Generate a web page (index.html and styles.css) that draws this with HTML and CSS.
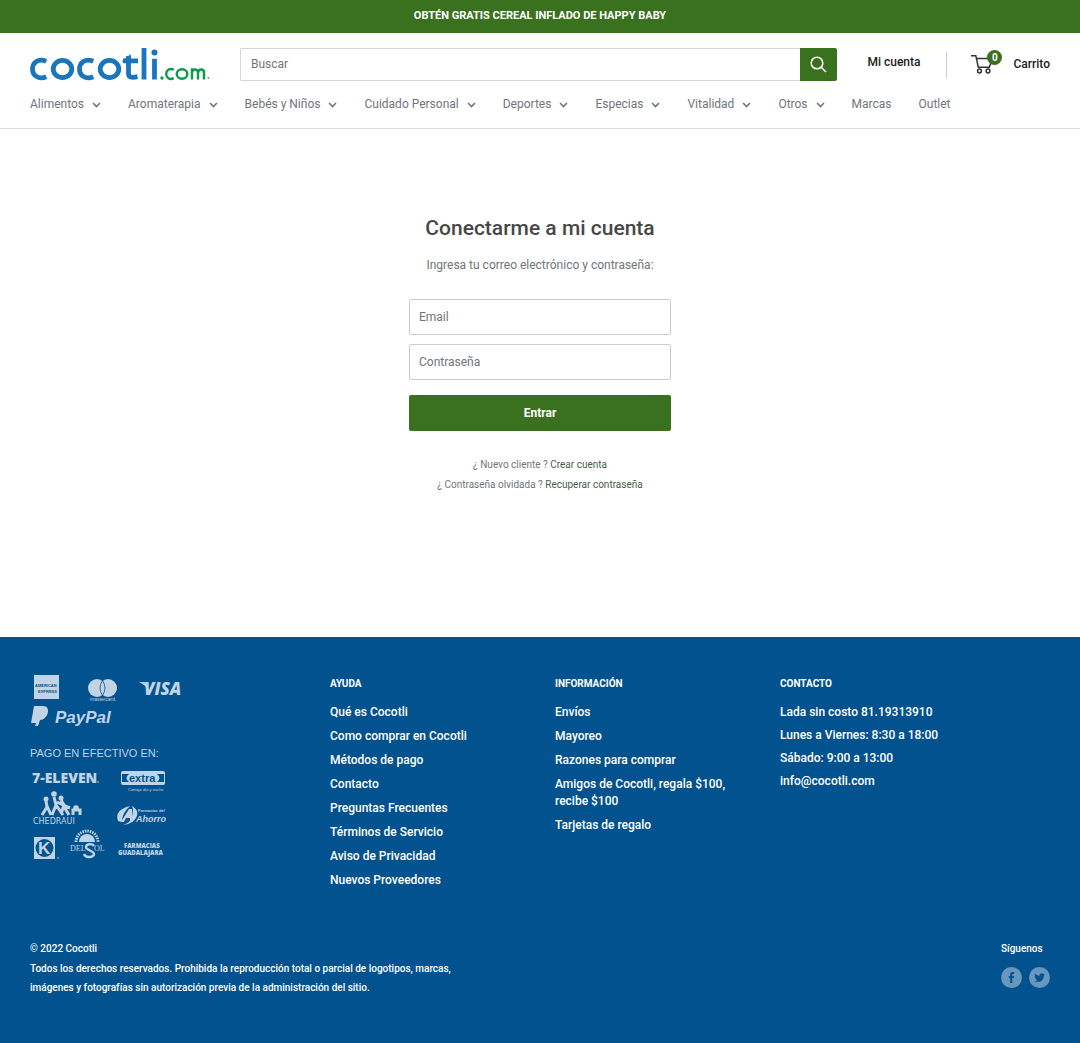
FILE: index.html
```html
<!DOCTYPE html>
<html lang="es">
<head>
<meta charset="utf-8">
<meta name="viewport" content="width=device-width, initial-scale=1">
<title>Cuenta – Cocotli.com</title>
<link rel="stylesheet" href="styles.css">
</head>
<body>
<svg class="sprite" width="0" height="0" aria-hidden="true">
  <symbol id="chevron" viewBox="0 0 10 8"><path d="M1.2 1.8 5 5.8l3.8-4" fill="none" stroke="currentColor" stroke-width="1.8"/></symbol>
</svg>
<div class="announcement">OBTÉN GRATIS CEREAL INFLADO DE HAPPY BABY</div>
<header class="header">
  <div class="header-row">
    <a class="logo" href="#" aria-label="Cocotli.com">
      <svg width="180" height="34" viewBox="0 0 180 34">
        <g fill="none" stroke="#1b75bc" stroke-width="4.8">
          <path d="M16.300 13.300C8 10 2.500 14.500 2.500 21s6 11 13.800 7.700"/>
          <ellipse cx="32.500" cy="21" rx="9.300" ry="8.600"/>
          <path d="M63.300 13.300C55 10 49.500 14.500 49.500 21s6 11 13.800 7.700"/>
          <ellipse cx="79.500" cy="21" rx="9.300" ry="8.600"/>
          <path d="M98.500 8v17.500q0 5.500 9 3.200M93 12.800h15"/>
          <path d="M114 0v31.500M124.500 10.800v20.700"/>
        </g>
        <path d="M91.500 13.500 100.700 6v7.500z" fill="#1b75bc"/>
        <circle cx="124.500" cy="4.500" r="3" fill="#1b75bc"/>
        <g fill="none" stroke="#0a9b48" stroke-width="2.400">
          <path d="M143.800 21.800c-4.300-2.200-7.600.4-7.600 4.200s3.300 6.300 7.600 4.200"/>
          <ellipse cx="152" cy="26" rx="5.300" ry="4.800"/>
          <path d="M162 20.200v11.300m0-7.500c1-3.500 6-3.500 6 1v6.500m0-7c1-4 6-4 6 .5v6.500"/>
        </g>
        <circle cx="132" cy="30" r="1.700" fill="#0a9b48"/>
        <circle cx="178.500" cy="30" r="1.100" fill="#6fa5d2"/>
      </svg>
    </a>
    <form class="search">
      <input class="search-input" type="search" placeholder="Buscar" aria-label="Buscar">
      <button class="search-button" type="button" aria-label="Buscar">
        <svg width="17" height="17" viewBox="0 0 17 17" fill="none" stroke="#fff" stroke-width="1.500"><circle cx="7" cy="7" r="5.800"/><path d="m11.200 11.200 4.800 4.800"/></svg>
      </button>
    </form>
    <a class="account" href="#">Mi cuenta</a>
    <a class="cart" href="#">
      <span class="cart-icon">
        <svg width="22" height="20" viewBox="0 0 22 20" fill="none" stroke="#333" stroke-width="1.500"><path d="M0 .7h4.800l2.500 11.500h11l3-8.700H5.500"/><circle cx="8.500" cy="16" r="1.900"/><circle cx="17" cy="16" r="1.900"/></svg>
        <span class="badge">0</span>
      </span>
      Carrito
    </a>
  </div>
  <nav class="nav">
    <a href="#">Alimentos <svg class="chev"><use href="#chevron"/></svg></a>
    <a href="#">Aromaterapia <svg class="chev"><use href="#chevron"/></svg></a>
    <a href="#">Bebés y Niños <svg class="chev"><use href="#chevron"/></svg></a>
    <a href="#">Cuidado Personal <svg class="chev"><use href="#chevron"/></svg></a>
    <a href="#">Deportes <svg class="chev"><use href="#chevron"/></svg></a>
    <a href="#">Especias <svg class="chev"><use href="#chevron"/></svg></a>
    <a href="#">Vitalidad <svg class="chev"><use href="#chevron"/></svg></a>
    <a href="#">Otros <svg class="chev"><use href="#chevron"/></svg></a>
    <a href="#">Marcas</a>
    <a href="#">Outlet</a>
  </nav>
</header>
<main class="main">
  <form class="login">
    <h1>Conectarme a mi cuenta</h1>
    <p class="intro">Ingresa tu correo electrónico y contraseña:</p>
    <input class="field" type="email" placeholder="Email" aria-label="Email">
    <input class="field" type="password" placeholder="Contraseña" aria-label="Contraseña">
    <button class="submit" type="button">Entrar</button>
    <p class="hint">¿ Nuevo cliente ? <a href="#">Crear cuenta</a></p>
    <p class="hint">¿ Contraseña olvidada ? <a href="#">Recuperar contraseña</a></p>
  </form>
</main>
<footer class="footer">
  <div class="footer-grid">
    <svg class="payments" width="152" height="188" viewBox="0 0 152 188" fill="#c1d3e4" font-family="Liberation Sans, sans-serif">
      <path d="M4 0h25v24H4z"/>
      <g fill="#02528f" font-weight="bold" font-size="4">
        <text x="5" y="12">AMERICAN</text><text x="8" y="18">EXPRESS</text>
      </g>
      <circle cx="67" cy="13" r="9"/><circle cx="78" cy="13" r="9"/>
      <path d="M72.500 5.500q-5 7.500 0 15q5-7.500 0-15z" fill="none" stroke="#02528f" stroke-width=".8"/>
      <text x="60" y="26" font-size="5">mastercard.</text>
      <text x="114" y="20" font-family="Open Sans, sans-serif" font-size="17" font-weight="800" font-style="italic">VISA</text>
      <path d="M109 7h6l4 8-1 1q-2-6-9-9z"/>
      <path d="M4 31h9c9 0 5 14-3 14l-2 6H5l1-3H1z"/>
      <text x="25" y="48" font-size="17" font-weight="bold" font-style="italic">PayPal</text>
      <text x="0" y="82" font-size="11">PAGO EN EFECTIVO EN:</text>
      <text x="2" y="108" font-family="Open Sans, sans-serif" font-size="14" font-weight="800">7-ELEVEN</text>
      <circle cx="68" cy="107" r=".8"/>
      <path d="M93 96h40q2 0 2 2v10q0 2-2 2H93q-2 0-2-2V98q0-2 2-2z"/>
      <path d="M92 99h7q-5 4 0 8h-7zM134 99h-7q5 4 0 8h7z" fill="#02528f"/>
      <text x="99" y="107" font-size="11" font-weight="bold" fill="#02528f">extra</text>
      <text x="98" y="116" font-size="4">Contigo día y noche</text>
      <g fill="none" stroke="#c1d3e4" stroke-width="3">
        <path d="m12 140 5-8-1-6M17 131l4 9M22 140l4-10-2-8M26 130l7 10M31 139l3-9-3-5M33 130l6 10M27 127l8 4 5 2"/>
        <path d="M43 140v-5h7v5"/>
      </g>
      <circle cx="16" cy="124" r="2.500"/><circle cx="24" cy="119" r="2.800"/><circle cx="31" cy="123" r="2.500"/><circle cx="46" cy="133" r="2.800"/>
      <text x="3" y="149" font-family="DejaVu Sans, sans-serif" font-size="8">CHEDRAUI</text>
      <path d="M100 131q-16 4-12 15l4 1q0-9 8-16zM102 131q8 5 4 12-4 6-13 7 8-3 9-8 2-6 0-11z"/>
      <path d="m91 147 8-13h3l1 13h-3v-4h-4l-2 4z"/>
      <text x="108" y="137" font-size="4" font-weight="bold">Farmacias del</text>
      <text x="106" y="147" font-size="9" font-weight="bold" font-style="italic">Ahorro</text>
      <path d="M4 162h21v22H4z"/><circle cx="14.500" cy="173" r="9" fill="#02528f"/>
      <text x="8" y="179" font-size="17" font-weight="bold">K</text><circle cx="28" cy="183" r=".8"/>
      <path d="M49 167a8 8 0 0 1 16 0z"/>
      <path d="M46 167a11 11 0 0 1 22 0" fill="none" stroke="#c1d3e4" stroke-width="3" stroke-dasharray="1.500 1"/>
      <g font-family="Liberation Serif, serif"><text x="40" y="176" font-size="8">DEL</text><text x="64" y="176" font-size="8">OL</text></g>
      <path d="M64 171c-2-3-8-2-8 1s8 4 8 7-8 5-10 0" fill="none" stroke="#c1d3e4" stroke-width="2.400"/>
      <g font-family="Open Sans, sans-serif" font-weight="800"><text x="94" y="173" font-size="6">FARMACIAS</text><text x="88" y="180" font-size="6">GUADALAJARA</text></g>
    </svg>
    <section>
      <h2>AYUDA</h2>
      <ul>
        <li><a href="#">Qué es Cocotli</a></li>
        <li><a href="#">Como comprar en Cocotli</a></li>
        <li><a href="#">Métodos de pago</a></li>
        <li><a href="#">Contacto</a></li>
        <li><a href="#">Preguntas Frecuentes</a></li>
        <li><a href="#">Términos de Servicio</a></li>
        <li><a href="#">Aviso de Privacidad</a></li>
        <li><a href="#">Nuevos Proveedores</a></li>
      </ul>
    </section>
    <section>
      <h2>INFORMACIÓN</h2>
      <ul>
        <li><a href="#">Envíos</a></li>
        <li><a href="#">Mayoreo</a></li>
        <li><a href="#">Razones para comprar</a></li>
        <li><a href="#">Amigos de Cocotli, regala $100, recibe $100</a></li>
        <li><a href="#">Tarjetas de regalo</a></li>
      </ul>
    </section>
    <section class="contact">
      <h2>CONTACTO</h2>
      <p>Lada sin costo 81.19313910<br>Lunes a Viernes: 8:30 a 18:00<br>Sábado: 9:00 a 13:00<br>info@cocotli.com</p>
    </section>
  </div>
  <div class="footer-bottom">
    <div class="legal">
      <p>© 2022 Cocotli</p>
      <p>Todos los derechos reservados. Prohibida la reproducción total o parcial de logotipos, marcas, imágenes y fotografías sin autorización previa de la administración del sitio.</p>
    </div>
    <div class="social">
      <p>Síguenos</p>
      <div class="social-links">
        <a href="#" aria-label="Facebook"><svg width="21" height="21" viewBox="0 0 21 21"><circle cx="10.500" cy="10.500" r="10.500" fill="#6797bc"/><path d="M9.200 16v-5H7.800V9h1.400V7.600c0-1.800 1-2.600 2.500-2.600h1.400v2h-.9c-.7 0-.9.300-.9.900V9h1.800l-.3 2h-1.500v5z" fill="#02528f"/></svg></a>
        <a href="#" aria-label="Twitter"><svg width="21" height="21" viewBox="0 0 21 21"><circle cx="10.500" cy="10.500" r="10.500" fill="#6797bc"/><path d="M16 7.200l-1.200.4.900-1.200-1.400.5c-1.500-1.500-4-.3-3.800 1.900-1.900-.1-3.400-1-4.500-2.300-.6 1-.3 2.300.7 3l-1-.3c0 1.100.7 1.900 1.800 2.200h-1c.3.900 1 1.500 2.100 1.600-.9.700-2 1-3.200.9 4.700 2.600 9.500-.3 9.400-5.500z" fill="#02528f"/></svg></a>
      </div>
    </div>
  </div>
</footer>
</body>
</html>
```

FILE: styles.css
```css
* { box-sizing: border-box; }
body { margin: 0; background: #fff; color: #6f757b; font: 12px/17px Roboto, "Liberation Sans", sans-serif; }
a { color: inherit; text-decoration: none; }
h1, h2, p, ul { margin: 0; padding: 0; }
ul { list-style: none; }
input, button { font: inherit; }
svg { display: block; }
.sprite { position: absolute; }

.announcement { padding: 7px 30px 8px; background: #3a711f; color: #fff; font-size: 11px; line-height: 18px; font-weight: 700; text-align: center; }

.header { padding: 15px 30px; border-bottom: 1px solid #d9dcda; }
.header-row { display: flex; align-items: center; }
.logo { margin-right: 30px; height: 33px; }
.search { display: flex; flex: 1; height: 33px; }
.search-input { flex: 1; min-width: 0; padding: 0 10px; border: 1px solid #d3d8d4; border-right: 0; border-radius: 2px 0 0 2px; background: #fff; appearance: none; }
.search-button { display: grid; place-items: center; width: 37px; padding: 0; border: 0; border-radius: 0 2px 2px 0; background: #3a711f; }
input::placeholder { color: #6f757b; opacity: 1; }
.account { margin-left: 30px; padding: 2px 26px 7px 0; border-right: 1px solid #c6cfc9; color: #222; font-weight: 500; }
.cart { display: flex; align-items: center; gap: 20px; margin-left: 24px; color: #222; font-weight: 500; }
.cart-icon { position: relative; }
.badge { position: absolute; top: -5px; right: -9px; width: 15px; height: 15px; border-radius: 50%; background: #3a711f; color: #fff; font-size: 10px; line-height: 15px; font-weight: 700; text-align: center; }
.nav { display: flex; gap: 27px; padding-top: 15px; }
.nav a { display: flex; align-items: center; gap: 8px; }
.chev { width: 9px; height: 8px; }

.main { padding: 84px 30px 142px; }
.login { width: 262px; margin: 0 auto; text-align: center; }
h1 { margin: 0 -20px 13px; color: #474747; font-size: 21px; line-height: 30px; font-weight: 500; }
.intro { margin-bottom: 25px; line-height: 18px; white-space: nowrap; }
.field { display: block; width: 100%; height: 36px; margin-bottom: 9px; padding: 0 9px; border: 1px solid #ccc; border-radius: 2px; }
.submit { display: block; width: 100%; height: 36px; margin: 15px 0 24px; border: 0; border-radius: 2px; background: #3a711f; color: #fff; font-weight: 700; }
.hint { font-size: 10px; line-height: 20px; }
.hint a { color: #45604a; }

.footer { padding: 38px 30px 46px; background: #02528f; color: #fff; font-weight: 500; }
.footer-grid { display: grid; grid-template-columns: 20fr 15fr 15fr 18fr; }
h2 { margin-bottom: 12px; font-size: 10px; line-height: 17px; font-weight: 700; }
.footer li { margin-bottom: 7px; padding-right: 50px; }
.contact h2 { margin-bottom: 9px; }
.contact p { line-height: 23px; }
.footer-bottom { display: flex; justify-content: space-between; margin-top: 43px; font-size: 10px; line-height: 19px; }
.legal { width: 440px; }
.legal p + p { margin-top: 1px; }
.social-links { display: flex; gap: 7px; margin-top: 9px; }
```
